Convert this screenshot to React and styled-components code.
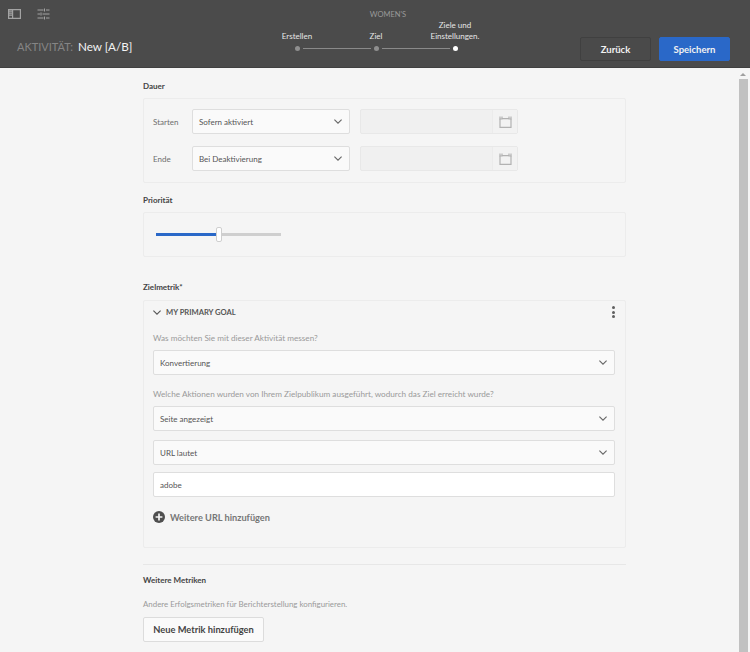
import styled, { createGlobalStyle } from "styled-components";

const Global = createGlobalStyle`
  html, body { margin: 0; padding: 0; height: 652px; overflow: hidden; background: #f5f5f5; }
  body { font-family: Lato, "Liberation Sans", sans-serif; }
  * { box-sizing: border-box; }
`;

const Page = styled.div`
  display: flex;
  flex-direction: column;
  width: 750px;
  height: 652px;
  overflow: hidden;
`;

const Header = styled.header`
  display: grid;
  grid-template-columns: 240px 1fr 240px;
  height: 68px;
  flex: none;
  background: #4b4b4b;
  border-bottom: 1px solid #404040;
`;

const HeaderLeft = styled.div`
  display: flex;
  flex-direction: column;
  justify-content: space-between;
  padding: 8px 0 12px 8px;
`;

const IconRow = styled.div`
  display: flex;
  gap: 16px;
  color: #a3a3a3;
  svg { display: block; }
`;

const Activity = styled.div`
  padding-left: 9px;
  font-size: 11.7px;
  line-height: 16px;
  color: #f4f4f4;
`;

const ActivityLabel = styled.span`
  font-size: 11px;
  color: #858585;
  margin-right: 2px;
`;

const HeaderCenter = styled.div`
  display: flex;
  flex-direction: column;
  align-items: center;
  padding: 9px 0 0 2px;
`;

const Collection = styled.div`
  padding-left: 24px;
  font-size: 7.5px;
  line-height: 11px;
  color: #9a9a9a;
`;

const Stepper = styled.div`
  display: flex;
`;

const Step = styled.div`
  position: relative;
  display: flex;
  flex-direction: column;
  justify-content: flex-end;
  align-items: center;
  width: 79px;
  height: 31px;
`;

const StepLabel = styled.div`
  font-size: 8px;
  line-height: 11px;
  color: #e6e6e6;
  text-align: center;
  white-space: nowrap;
  padding-bottom: 3px;
`;

const StepTrack = styled.div`
  display: flex;
  align-items: center;
  justify-content: center;
  height: 6px;
  width: 100%;
`;

const Dot = styled.span`
  width: 5px;
  height: 5px;
  border-radius: 50%;
  background: ${({ $active }) => ($active ? "#fff" : "#8f8f8f")};
`;

const StepLine = styled.span`
  position: absolute;
  left: 45px;
  bottom: 2px;
  width: 68px;
  height: 1px;
  background: #8a8a8a;
`;

const HeaderRight = styled.div`
  display: flex;
  justify-content: flex-end;
  gap: 8px;
  padding: 37px 20px 0 0;
`;

const HeaderButton = styled.button`
  width: 71px;
  height: 24px;
  padding: 0;
  border: 1px solid ${({ $primary }) => ($primary ? "#2a68c8" : "#404040")};
  border-radius: 2px;
  background: ${({ $primary }) => ($primary ? "#2a68c8" : "#4a4a4a")};
  color: #f2f2f2;
  font-family: inherit;
  font-size: 9.5px;
  font-weight: 700;
`;

const Body = styled.div`
  position: relative;
  flex: 1;
  min-height: 0;
  display: flex;
  justify-content: flex-start;
  padding: 0 0 0 143px;
`;

const Scrollbar = styled.div`
  position: absolute;
  top: 0;
  bottom: 0;
  right: 2px;
  width: 10px;
  display: flex;
  flex-direction: column;
  align-items: center;
`;

const ScrollArrow = styled.span`
  margin-top: 5px;
  width: 0;
  height: 0;
  border-left: 3px solid transparent;
  border-right: 3px solid transparent;
  border-bottom: 3px solid #a0a0a0;
`;

const ScrollThumb = styled.div`
  flex: 1;
  width: 9px;
  margin-top: 3px;
  background: #c1c1c1;
`;

const Content = styled.main`
  width: 483px;
  flex: none;
  padding-top: 12px;
`;

const SectionTitle = styled.h2`
  margin: ${({ $top }) => $top || 0}px 0 ${({ $bottom }) => $bottom || 6}px;
  font-size: 8px;
  line-height: 12px;
  font-weight: 700;
  color: #444;
`;

const Panel = styled.section`
  border: 1px solid #ececec;
  border-radius: 2px;
  background: #f5f5f5;
  padding: ${({ $pad }) => $pad};
`;

const DateRow = styled.div`
  display: flex;
  align-items: center;
  margin-top: ${({ $top }) => $top || 0}px;
`;

const RowLabel = styled.span`
  width: 39px;
  font-size: 8px;
  color: #6e6e6e;
`;

const SelectBox = styled.div`
  display: flex;
  align-items: center;
  justify-content: space-between;
  width: ${({ $width }) => $width || "100%"};
  height: 25px;
  padding: 0 7px 0 6px;
  margin-top: ${({ $top }) => $top || 0}px;
  border: 1px solid #dedede;
  border-radius: 2px;
  background: #fafafa;
  font-size: 8px;
  color: #555;
  svg { display: block; color: #666; }
`;

const DateField = styled.div`
  display: flex;
  width: 158px;
  height: 25px;
  margin-left: 10px;
  border: 1px solid #e8e8e8;
  border-radius: 2px;
  background: #f0f0f0;
`;

const DateInput = styled.div`
  flex: 1;
`;

const DateButton = styled.div`
  display: flex;
  align-items: center;
  justify-content: center;
  width: 25px;
  border-left: 1px solid #ebebeb;
  background: #f2f2f2;
  color: #b2b2b2;
`;

const SliderTrack = styled.div`
  position: relative;
  width: 125px;
  height: 3px;
  background: #cfcfcf;
`;

const SliderFill = styled.div`
  height: 100%;
  background: #2a68c8;
`;

const SliderHandle = styled.div`
  position: absolute;
  top: -6px;
  width: 6px;
  height: 15px;
  margin-left: -3px;
  border: 1px solid #cfcfcf;
  border-radius: 2px;
  background: #fff;
`;

const GoalHeader = styled.div`
  display: flex;
  align-items: center;
  justify-content: space-between;
  height: 12px;
  color: #555;
  svg { display: block; }
`;

const GoalTitle = styled.div`
  display: flex;
  align-items: center;
  gap: 5px;
  font-size: 7.6px;
  font-weight: 700;
  color: #555;
`;

const Kebab = styled.div`
  display: flex;
  flex-direction: column;
  gap: 1.5px;
  span {
    width: 3px;
    height: 3px;
    border-radius: 50%;
    background: #5f5f5f;
  }
`;

const Question = styled.p`
  margin: ${({ $top }) => $top}px 0 6px;
  font-size: 8.2px;
  line-height: 12px;
  color: #9a9a9a;
`;

const TextInput = styled(SelectBox)`
  background: #fff;
`;

const AddLink = styled.div`
  display: flex;
  align-items: center;
  gap: 5px;
  margin-top: 14px;
  font-size: 9.2px;
  font-weight: 700;
  color: #777;
  svg { display: block; color: #4f4f4f; }
`;

const Divider = styled.hr`
  margin: 16px 0 0;
  border: 0;
  border-top: 1px solid #e7e7e7;
`;

const Hint = styled.p`
  margin: 12px 0 7px;
  font-size: 7.9px;
  line-height: 12px;
  color: #9a9a9a;
`;

const OutlineButton = styled.button`
  width: 121px;
  height: 25px;
  padding: 0;
  border: 1px solid #dcdcdc;
  border-radius: 2px;
  background: #fafafa;
  color: #444;
  font-family: inherit;
  font-size: 9.3px;
  font-weight: 700;
`;

const Chevron = () => (
  <svg width="8" height="5" viewBox="0 0 8 5" fill="none" stroke="currentColor" strokeWidth="1.1">
    <path d="M.4.6 4 4.2 7.6.6" />
  </svg>
);

const CalendarIcon = () => (
  <svg width="13" height="12" viewBox="0 0 13 12" fill="none" stroke="currentColor" strokeWidth="1.2">
    <path d="M1 2.8V11.4H12V2.8" />
    <path d="M1 .6V3H3V.6M3 2.6H10M10 .6V3H12V.6" />
  </svg>
);

const PanelIcon = () => (
  <svg width="13" height="12" viewBox="0 0 13 12" fill="none" stroke="currentColor" strokeWidth="1.2">
    <path d="M.6 1.6h11.8v8.8H.6z" />
    <path d="M1 3.2h3.4M1 5.2h3.4M1 7.2h3.4M4.6 2v8" />
  </svg>
);

const FiltersIcon = () => (
  <svg width="13" height="12" viewBox="0 0 13 12" fill="none" stroke="currentColor" strokeWidth="1">
    <path d="M.5 2h6M9 2h3.5M.5 6h2.5M5.5 6h7M.5 10h6M9 10h3.5" />
    <path d="M7.5.5v3M4 4.5v3M7.5 8.5v3" />
  </svg>
);

const PlusCircle = () => (
  <svg width="12" height="12" viewBox="0 0 12 12">
    <circle cx="6" cy="6" r="6" fill="currentColor" />
    <path d="M6 2.6v6.8M2.6 6h6.8" stroke="#f5f5f5" strokeWidth="1.7" />
  </svg>
);

const steps = [
  { label: "Erstellen" },
  { label: "Ziel" },
  { label: "Ziele und\nEinstellungen.", active: true },
];

const Select = ({ children, width, top }) => (
  <SelectBox $width={width} $top={top}>
    {children}
    <Chevron />
  </SelectBox>
);

const DatePicker = () => (
  <DateField>
    <DateInput />
    <DateButton>
      <CalendarIcon />
    </DateButton>
  </DateField>
);

export default function App() {
  return (
    <Page>
      <Global />
      <Header>
        <HeaderLeft>
          <IconRow>
            <PanelIcon />
            <FiltersIcon />
          </IconRow>
          <Activity>
            <ActivityLabel>AKTIVITÄT:</ActivityLabel> New [A/B]
          </Activity>
        </HeaderLeft>
        <HeaderCenter>
          <Collection>WOMEN'S</Collection>
          <Stepper>
            {steps.map((s, i) => (
              <Step key={s.label}>
                <StepLabel>
                  {s.label.split("\n").map((line) => (
                    <div key={line}>{line}</div>
                  ))}
                </StepLabel>
                <StepTrack>
                  <Dot $active={s.active} />
                </StepTrack>
                {i < steps.length - 1 && <StepLine />}
              </Step>
            ))}
          </Stepper>
        </HeaderCenter>
        <HeaderRight>
          <HeaderButton>Zurück</HeaderButton>
          <HeaderButton $primary>Speichern</HeaderButton>
        </HeaderRight>
      </Header>
      <Body>
        <Content>
          <SectionTitle>Dauer</SectionTitle>
          <Panel $pad="10px 0 11px 9px">
            <DateRow>
              <RowLabel>Starten</RowLabel>
              <Select width="158px">Sofern aktiviert</Select>
              <DatePicker />
            </DateRow>
            <DateRow $top={12}>
              <RowLabel>Ende</RowLabel>
              <Select width="158px">Bei Deaktivierung</Select>
              <DatePicker />
            </DateRow>
          </Panel>
          <SectionTitle $top={11}>Priorität</SectionTitle>
          <Panel $pad="20px 0 20px 12px">
            <SliderTrack>
              <SliderFill style={{ width: "50%" }} />
              <SliderHandle style={{ left: "50%" }} />
            </SliderTrack>
          </Panel>
          <SectionTitle $top={24} $bottom={7}>Zielmetrik*</SectionTitle>
          <Panel $pad="5px 10px 24px 9px">
            <GoalHeader>
              <GoalTitle>
                <Chevron />
                MY PRIMARY GOAL
              </GoalTitle>
              <Kebab>
                <span />
                <span />
                <span />
              </Kebab>
            </GoalHeader>
            <Question $top={14}>Was möchten Sie mit dieser Aktivität messen?</Question>
            <Select>Konvertierung</Select>
            <Question $top={13}>
              Welche Aktionen wurden von Ihrem Zielpublikum ausgeführt, wodurch das Ziel erreicht wurde?
            </Question>
            <Select>Seite angezeigt</Select>
            <Select top={9}>URL lautet</Select>
            <TextInput $top={7}>adobe</TextInput>
            <AddLink>
              <PlusCircle />
              Weitere URL hinzufügen
            </AddLink>
          </Panel>
          <Divider />
          <SectionTitle $top={9}>Weitere Metriken</SectionTitle>
          <Hint>Andere Erfolgsmetriken für Berichterstellung konfigurieren.</Hint>
          <OutlineButton>Neue Metrik hinzufügen</OutlineButton>
        </Content>
        <Scrollbar>
          <ScrollArrow />
          <ScrollThumb />
        </Scrollbar>
      </Body>
    </Page>
  );
}
